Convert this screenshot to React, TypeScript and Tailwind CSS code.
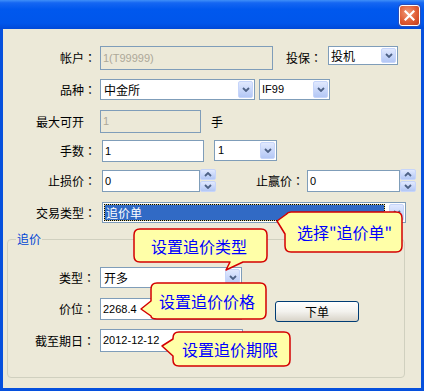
import React from "react";

function Chevron({ up = false }: { up?: boolean }) {
  return (
    <svg width="8" height="5" viewBox="0 0 8 5">
      <path
        d={up ? "M1 4L4 1L7 4" : "M1 1L4 4L7 1"}
        fill="none"
        stroke="#4d6185"
        strokeWidth="1.8"
      />
    </svg>
  );
}

function DropBtn() {
  return (
    <div className="w-[15px] m-px shrink-0 flex items-center justify-center rounded-[2px] border border-[#c6d5fa] bg-linear-to-b from-[#e1e9fe] to-[#b3c7f5]">
      <Chevron />
    </div>
  );
}

function Spinner() {
  return (
    <div className="w-[16px] h-[23px] shrink-0 flex flex-col gap-px">
      <div className="flex-1 flex items-center justify-center rounded-[2px] border border-[#c6d5fa] bg-linear-to-b from-[#e1e9fe] to-[#b3c7f5]">
        <Chevron up />
      </div>
      <div className="flex-1 flex items-center justify-center rounded-[2px] border border-[#c6d5fa] bg-linear-to-b from-[#e1e9fe] to-[#b3c7f5]">
        <Chevron />
      </div>
    </div>
  );
}

function Label({ text, colon = true, className }: { text: string; colon?: boolean; className: string }) {
  return (
    <div className={"flex items-center justify-end text-[12px] leading-none whitespace-nowrap " + className}>
      {text}
      {colon && <span className="font-['Noto_Sans_CJK_JP',sans-serif]">：</span>}
    </div>
  );
}

export default function App() {
  const num = "font-['Liberation_Sans','Noto_Sans_CJK_SC',sans-serif] text-[11px]";
  return (
    <div className="relative w-[424px] h-[391px] flex flex-col bg-[#0650dd] font-['Noto_Sans_CJK_SC',sans-serif] text-black overflow-hidden">
      {/* title bar */}
      <div className="h-[29px] shrink-0 flex justify-end items-start pr-[4px] pt-[5px] bg-[linear-gradient(180deg,#3f8ff8_0%,#1566f2_10%,#0058ee_32%,#0056eb_80%,#0049d8_100%)]">
        <div className="w-[21px] h-[21px] rounded-[3px] border border-white bg-[radial-gradient(circle_at_40%_35%,#f19a78_0%,#df5c34_55%,#c23b1b_100%)] flex items-center justify-center shadow-[0_0_0_1px_#2a4fb8]">
          <svg width="11" height="11" viewBox="0 0 11 11">
            <path d="M1.5 1.5L9.5 9.5M9.5 1.5L1.5 9.5" stroke="white" strokeWidth="2.2" strokeLinecap="square" />
          </svg>
        </div>
      </div>

      {/* body */}
      <div className="flex-1 mx-[3px] mb-[3px] bg-[#ece9d8] flex flex-col">
        {/* row 1 */}
        <div className="mt-[17px] h-[24px] flex items-start pl-[33px]">
          <Label text="帐户" className="w-[60px] h-[24px]" />
          <div className={"ml-[4px] w-[173px] h-[24px] border border-[#7f9db9] bg-[#ece9d8] text-[#aca899] pl-[2px] flex items-center " + num}>
            1(T99999)
          </div>
          <Label text="投保" className="ml-[13px] w-[36px] h-[24px]" />
          <div className="ml-[6px] w-[70px] h-[19px] flex border border-[#7f9db9] bg-white">
            <div className="flex-1 flex items-center pl-[2px] text-[12px]">投机</div>
            <DropBtn />
          </div>
        </div>

        {/* row 2 */}
        <div className="mt-[9px] h-[21px] flex items-start pl-[33px]">
          <Label text="品种" className="w-[60px] h-[21px]" />
          <div className="ml-[4px] w-[155px] h-[21px] flex border border-[#7f9db9] bg-white">
            <div className="flex-1 flex items-center pl-[3px] text-[12px]">中金所</div>
            <DropBtn />
          </div>
          <div className="ml-[4px] w-[71px] h-[21px] flex border border-[#7f9db9] bg-white">
            <div className={"flex-1 flex items-center pl-[2px] " + num}>IF99</div>
            <DropBtn />
          </div>
        </div>

        {/* row 3 */}
        <div className="mt-[10px] h-[23px] flex items-start pl-[33px]">
          <Label text="最大可开" colon={false} className="w-[60px] h-[23px] pr-[12px]" />
          <div className={"ml-[4px] w-[101px] h-[23px] border border-[#7f9db9] bg-[#ece9d8] text-[#aca899] pl-[2px] flex items-center " + num}>
            1
          </div>
          <div className="ml-[10px] h-[23px] flex items-center text-[12px]">手</div>
        </div>

        {/* row 4 */}
        <div className="mt-[7px] h-[22px] flex items-start pl-[33px]">
          <Label text="手数" className="w-[60px] h-[22px]" />
          <div className={"ml-[6px] w-[102px] h-[22px] border border-[#7f9db9] bg-white pl-[2px] flex items-center " + num}>
            1
          </div>
          <div className="ml-[10px] w-[63px] h-[21px] flex border border-[#7f9db9] bg-white">
            <div className={"flex-1 flex items-center pl-[3px] " + num}>1</div>
            <DropBtn />
          </div>
        </div>

        {/* row 5 */}
        <div className="mt-[7px] h-[23px] flex items-start pl-[33px]">
          <Label text="止损价" className="w-[60px] h-[23px]" />
          <div className={"ml-[6px] mt-px w-[98px] h-[22px] border border-[#7f9db9] bg-white pl-[2px] flex items-center " + num}>
            0
          </div>
          <Spinner />
          <Label text="止赢价" className="ml-[40px] w-[48px] h-[23px]" />
          <div className={"ml-[3px] mt-px w-[93px] h-[22px] border border-[#7f9db9] bg-white pl-[2px] flex items-center " + num}>
            0
          </div>
          <Spinner />
        </div>

        {/* row 6 */}
        <div className="mt-[10px] h-[21px] flex items-start pl-[33px]">
          <Label text="交易类型" className="w-[60px] h-[21px]" />
          <div className="ml-[6px] w-[304px] h-[21px] flex border border-[#7f9db9] bg-white">
            <div className="flex-1 my-px ml-px mr-[3px] border border-dotted border-black bg-[#d8cf8a]">
              <div className="h-full bg-[#316ac5] text-white flex items-center pl-px text-[12px]">追价单</div>
            </div>
            <DropBtn />
          </div>
        </div>

        {/* group box */}
        <div className="relative mt-[16px] ml-[4px] w-[398px] h-[139px] border border-[#d0d0bf] rounded-[4px] flex flex-col">
          <div className="absolute -top-[9px] left-[8px] px-[1px] bg-[#ece9d8] text-[#0046d5] text-[12px] leading-[16px]">追价</div>

          <div className="mt-[27px] h-[21px] flex items-start pl-[27px]">
            <Label text="类型" className="w-[60px] h-[21px]" />
            <div className="ml-[5px] w-[142px] h-[21px] flex border border-[#7f9db9] bg-white">
              <div className="flex-1 flex items-center pl-[3px] text-[12px]">开多</div>
              <DropBtn />
            </div>
          </div>

          <div className="mt-[10px] h-[22px] flex items-start pl-[27px]">
            <Label text="价位" className="w-[60px] h-[22px]" />
            <div className={"ml-[5px] w-[142px] h-[22px] border border-[#7f9db9] bg-white pl-[2px] flex items-center " + num}>
              2268.4
            </div>
            <div className="ml-[33px] mt-[3px] w-[84px] h-[21px] rounded-[3px] border border-[#003c74] bg-linear-to-b from-[#ffffff] via-[#f3f2ee] to-[#d8d3c8] flex items-center justify-center text-[12px]">
              下单
            </div>
          </div>

          <div className="mt-[9px] h-[23px] flex items-start pl-[27px]">
            <Label text="截至期日" className="w-[60px] h-[23px]" />
            <div className={"ml-[5px] w-[143px] h-[23px] border border-[#7f9db9] bg-white pl-[2px] flex items-center " + num}>
              2012-12-12
            </div>
          </div>
        </div>
      </div>

      {/* callouts */}
      <svg className="absolute inset-0 pointer-events-none" width="424" height="391" viewBox="0 0 424 391">
        <g fill="#ffffa8" stroke="#d40000" strokeWidth="1.5" strokeLinejoin="round">
          <path d="M291 212H396Q402 212 402 218V246Q402 252 396 252H291Q285 252 285 246V234L277 221L286 214.5Q288 212 291 212Z" />
          <path d="M140 229H261Q267 229 267 235V256Q267 262 261 262H243L226 270L230 262H140Q134 262 134 256V235Q134 229 140 229Z" />
          <path d="M157 283H260Q266 283 266 289V313Q266 319 260 319H157Q151 319 151 316L141 309L151 301V289Q151 283 157 283Z" />
          <path d="M179 332H284Q290 332 290 338V360Q290 366 284 366H179Q173 366 173 360V356L162 346L173 339V338Q173 332 179 332Z" />
        </g>
      </svg>
      <div className="absolute left-[297px] top-[212px] h-[40px] flex items-center text-[16px] leading-none text-[#0000ff] whitespace-nowrap">选择"追价单"</div>
      <div className="absolute left-[151px] top-[229px] h-[33px] flex items-center text-[16px] leading-none text-[#0000ff] whitespace-nowrap">设置追价类型</div>
      <div className="absolute left-[159px] top-[283px] h-[36px] flex items-center text-[16px] leading-none text-[#0000ff] whitespace-nowrap">设置追价价格</div>
      <div className="absolute left-[182px] top-[332px] h-[34px] flex items-center text-[16px] leading-none text-[#0000ff] whitespace-nowrap">设置追价期限</div>
    </div>
  );
}
